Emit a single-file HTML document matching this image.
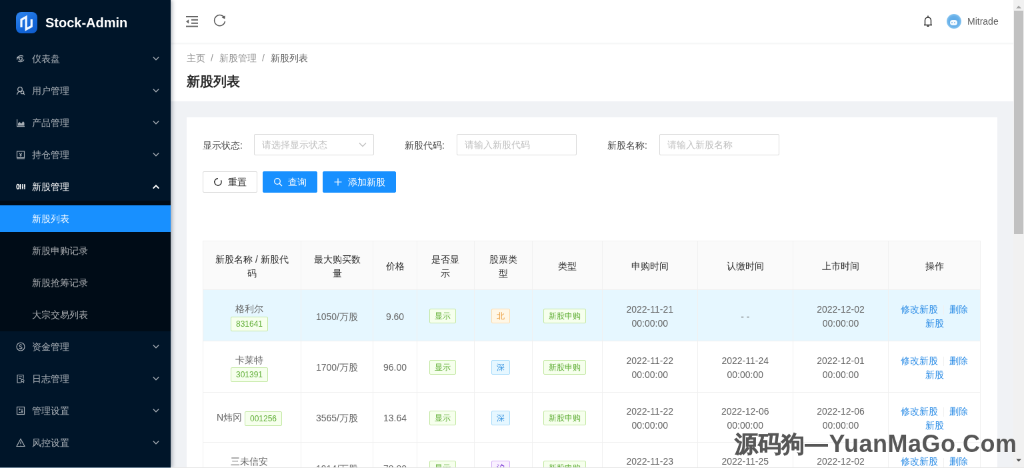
<!DOCTYPE html>
<html><head><meta charset="utf-8"><style>
html,body{margin:0;padding:0;width:1024px;height:468px;overflow:hidden;background:#f0f2f5;}
#root{position:absolute;left:0;top:0;width:1536px;height:702px;transform:scale(0.6666667);will-change:transform;transform-origin:0 0;font-family:"Liberation Sans",sans-serif;font-size:14px;color:rgba(0,0,0,.65);background:#f0f2f5;overflow:hidden}
.abs{position:absolute}
#sider{position:absolute;left:0;top:0;width:256px;height:702px;background:#001529;box-shadow:2px 0 6px rgba(0,21,41,.35);z-index:5}
#logo{position:absolute;left:24px;top:18px;width:32px;height:32px;border-radius:8px;background:linear-gradient(150deg,#2f86ee,#1366d8 60%,#0f5ccc)}
#title{position:absolute;left:68px;top:19px;line-height:30px;font-size:20px;font-weight:bold;color:#fff}
#sub{position:absolute;left:0;top:301px;width:256px;height:196px;background:#000c17}
.mi{position:absolute;left:0;width:256px;height:40px;line-height:40px;color:rgba(255,255,255,.65);white-space:nowrap}
.mi .ic{position:absolute;left:24px;top:13px;width:14px;height:14px;line-height:0}
.mi .lb{position:absolute;left:48px;top:0}
.mi .ar{position:absolute;left:228.5px;top:14.5px;line-height:0}
.mi.sel{background:#1890ff;color:#fff}
.mi.open{color:#fff}
#header{position:absolute;left:256px;top:0;width:1280px;height:64px;background:#fff;box-shadow:0 1px 4px rgba(0,21,41,.08);z-index:3}
#ph{position:absolute;left:256px;top:64px;width:1280px;height:88px;background:#fff}
.crumb{position:absolute;top:76px;line-height:22px;color:rgba(0,0,0,.45)}
#ptitle{position:absolute;left:280px;top:106px;font-size:20px;font-weight:bold;line-height:32px;color:rgba(0,0,0,.85)}
#card{position:absolute;left:280px;top:176px;width:1216px;height:600px;background:#fff}
.lbl{position:absolute;top:206.5px;line-height:22px;color:rgba(0,0,0,.75)}
.inp{position:absolute;top:201px;height:30px;width:178px;border:1px solid #d9d9d9;border-radius:2px;background:#fff;line-height:30px;color:#bfbfbf;box-sizing:content-box}
.inp span{position:absolute;left:11px;top:0}
.btn{position:absolute;top:257px;height:30px;line-height:30px;border:1px solid #d9d9d9;border-radius:2px;background:#fff;color:rgba(0,0,0,.85);white-space:nowrap}
.btn.pri{background:#1890ff;border-color:#1890ff;color:#fff}
.btn .bi{position:absolute;left:15px;top:8px;line-height:0}
.btn .bt{position:absolute;left:37px;top:0}
.th,.td{position:absolute;box-sizing:border-box;border-right:1.5px solid #f0f0f0;border-bottom:1.5px solid #f0f0f0;display:flex;align-items:center;justify-content:center;text-align:center}
.th{background:#fafafa;color:rgba(0,0,0,.85);border-top:1.5px solid #f0f0f0}
.td{color:#646464}
.td.hl{background:#e6f7ff}
.fl{border-left:1.5px solid #f0f0f0}
.ct{line-height:21px;padding:0 16px;position:relative;top:2px}
.tag{display:inline-block;box-sizing:border-box;height:22px;line-height:20px;padding:0 7px;font-size:12px;border:1px solid;border-radius:2px;vertical-align:middle}
.tag.green{background:#f6ffed;border-color:#c3e8a3;color:#5fae35}
.tag.orange{background:#fff7e6;border-color:#fddcae;color:#e99a3a}
.tag.blue{background:#e6f7ff;border-color:#a9dcfb;color:#3a95e0}
.tag.purple{background:#f9f0ff;border-color:#d3adf7;color:#722ed1}
.tag.mr{margin-right:8px;position:relative;top:-1px}
.ct.nm{padding:0 20px 0 12px}
a{color:#2b8ce6}
.dv{display:inline-block;width:1px;height:14px;background:#f0f0f0;margin:0 8px;vertical-align:middle}
#scroll{position:absolute;left:1520px;top:0;width:16px;height:702px;background:#f1f1f1;z-index:10}
#thumb{position:absolute;left:1px;top:16px;width:14px;height:335px;background:#c1c1c1}
#wm{position:absolute;left:1103px;top:646px;height:40px;width:420px;font-weight:bold;color:#575757;white-space:nowrap;z-index:20;text-shadow:0 0 1.5px #fff,0 0 1.5px #fff,0 0 1.5px #fff}
.wc{position:absolute;left:-1px;top:0;font-size:34.5px;line-height:40px;-webkit-text-stroke:0.7px #575757}
.wd{position:absolute;left:104.2px;top:20.2px;width:35.2px;height:3.6px;background:#575757;box-shadow:0 0 1.5px #fff}
.wl{position:absolute;left:140.5px;top:0;font-size:36px;line-height:40px;letter-spacing:0.5px}
#bottomline{position:absolute;left:256px;top:700.5px;width:1280px;height:1.5px;background:#e6e6e6;z-index:30}
#bottomline2{position:absolute;left:0;top:700.5px;width:256px;height:1.5px;background:#8096a9;z-index:30}
</style></head><body><div id="root">
<div id="sider">
 <div id="logo"><svg width="32" height="32" viewBox="0 0 32 32" fill="none" stroke="#f2f8ff" stroke-width="3.2" stroke-linejoin="miter" stroke-linecap="butt"><path d="M8 23V11.5L15.2 7.5V26L23.3 21.5V11"/></svg></div>
 <div id="title">Stock-Admin</div>
 <div id="sub"></div>
<div class="mi" style="top:68px"><span class="ic"><svg width="14" height="14" viewBox="0 0 14 14" fill="none" stroke="currentColor" stroke-width="1.3"><path d="M2 5.5C3.5 2.5 8 1.5 11 3.5M12 8.5C10.5 11.5 6 12.5 3 10.5"/><circle cx="7" cy="7" r="2.3"/><path d="M1.5 8.5 2 5.3 4.8 6"/></svg></span><span class="lb">仪表盘</span><span class="ar"><svg width="10" height="10" viewBox="0 0 10 10" fill="none" stroke="currentColor" stroke-width="1.35" stroke-linecap="round"><path d="M1.2 3 5 6.8 8.8 3"/></svg></span></div>
<div class="mi" style="top:116px"><span class="ic"><svg width="14" height="14" viewBox="0 0 14 14" fill="none" stroke="currentColor" stroke-width="1.3"><circle cx="6" cy="5" r="3.3"/><path d="M1.5 13C2 10 3.5 8.5 6 8.3"/><circle cx="9.5" cy="9.5" r="2.2"/><path d="M11 11l2 2"/></svg></span><span class="lb">用户管理</span><span class="ar"><svg width="10" height="10" viewBox="0 0 10 10" fill="none" stroke="currentColor" stroke-width="1.35" stroke-linecap="round"><path d="M1.2 3 5 6.8 8.8 3"/></svg></span></div>
<div class="mi" style="top:164px"><span class="ic"><svg width="14" height="14" viewBox="0 0 14 14" fill="currentColor"><path d="M1 2h1.2v10H13v1.2H1z"/><path d="M3 11.5V8l2.5-2 2.5 2.5L10.5 5 12.5 7v4.5z"/></svg></span><span class="lb">产品管理</span><span class="ar"><svg width="10" height="10" viewBox="0 0 10 10" fill="none" stroke="currentColor" stroke-width="1.35" stroke-linecap="round"><path d="M1.2 3 5 6.8 8.8 3"/></svg></span></div>
<div class="mi" style="top:212px"><span class="ic"><svg width="14" height="14" viewBox="0 0 14 14" fill="none" stroke="currentColor" stroke-width="1.2"><rect x="1.5" y="2" width="11" height="9.5"/><path d="M1 13h12"/><path d="M5 4.5l2 2.5 2-2.5M7 7v3M5.3 7.8h3.4"/></svg></span><span class="lb">持仓管理</span><span class="ar"><svg width="10" height="10" viewBox="0 0 10 10" fill="none" stroke="currentColor" stroke-width="1.35" stroke-linecap="round"><path d="M1.2 3 5 6.8 8.8 3"/></svg></span></div>
<div class="mi open" style="top:260px"><span class="ic"><svg width="14" height="14" viewBox="0 0 14 14" fill="none" stroke="currentColor" stroke-width="1.5"><ellipse cx="2.8" cy="7" rx="1.6" ry="3.5"/><path d="M6.5 3v8M10 3v8M13 3v8"/><path d="M5.5 6h2M9 8h2M12 6h2"/></svg></span><span class="lb">新股管理</span><span class="ar"><svg width="10" height="10" viewBox="0 0 10 10" fill="none" stroke="currentColor" stroke-width="1.9" stroke-linecap="round"><path d="M1.3 7 5 3.3 8.7 7"/></svg></span></div>
<div class="mi sel" style="top:308px"><span class="lb">新股列表</span></div>
<div class="mi" style="top:356px"><span class="lb">新股申购记录</span></div>
<div class="mi" style="top:404px"><span class="lb">新股抢筹记录</span></div>
<div class="mi" style="top:452px"><span class="lb">大宗交易列表</span></div>
<div class="mi" style="top:500px"><span class="ic"><svg width="14" height="14" viewBox="0 0 14 14" fill="none" stroke="currentColor" stroke-width="1.2"><circle cx="7" cy="7" r="6"/><path d="M9 5C8.5 4 5 3.8 5 5.5S9 7 9 8.8 5.5 10 5 9M7 3v1M7 10v1"/></svg></span><span class="lb">资金管理</span><span class="ar"><svg width="10" height="10" viewBox="0 0 10 10" fill="none" stroke="currentColor" stroke-width="1.35" stroke-linecap="round"><path d="M1.2 3 5 6.8 8.8 3"/></svg></span></div>
<div class="mi" style="top:548px"><span class="ic"><svg width="14" height="14" viewBox="0 0 14 14" fill="none" stroke="currentColor" stroke-width="1.2"><path d="M7 13H2V1.5h9V7"/><path d="M4 4h5M4 6.5h4"/><path d="M8 13V8.5h2.5a1.5 1.5 0 0 1 0 3H8M10 11.5l2 1.5"/></svg></span><span class="lb">日志管理</span><span class="ar"><svg width="10" height="10" viewBox="0 0 10 10" fill="none" stroke="currentColor" stroke-width="1.35" stroke-linecap="round"><path d="M1.2 3 5 6.8 8.8 3"/></svg></span></div>
<div class="mi" style="top:596px"><span class="ic"><svg width="14" height="14" viewBox="0 0 14 14" fill="none" stroke="currentColor" stroke-width="1.2"><rect x="1.5" y="1.5" width="11" height="11"/><path d="M4 5h3M5.5 3.5v3M4 9.5h3M9 4v6M8 8l1 2 1-2"/></svg></span><span class="lb">管理设置</span><span class="ar"><svg width="10" height="10" viewBox="0 0 10 10" fill="none" stroke="currentColor" stroke-width="1.35" stroke-linecap="round"><path d="M1.2 3 5 6.8 8.8 3"/></svg></span></div>
<div class="mi" style="top:644px"><span class="ic"><svg width="14" height="14" viewBox="0 0 14 14" fill="none" stroke="currentColor" stroke-width="1.2"><path d="M7 1.5 13 12.5H1z"/><path d="M7 5.5v3.5M7 10.3v1"/></svg></span><span class="lb">风控设置</span><span class="ar"><svg width="10" height="10" viewBox="0 0 10 10" fill="none" stroke="currentColor" stroke-width="1.35" stroke-linecap="round"><path d="M1.2 3 5 6.8 8.8 3"/></svg></span></div>
</div>
<div id="header">
 <svg class="abs" style="left:23px;top:24px" width="18" height="18" viewBox="0 0 18 18" fill="#666"><rect x="0" y="0" width="18" height="2"/><rect x="8" y="4.8" width="10" height="2"/><rect x="8" y="9.8" width="10" height="2"/><rect x="0" y="14.6" width="18" height="2"/><path d="M0 8.3 4.2 5.2v6.2z"/></svg>
 <svg class="abs" style="left:64px;top:19.5px" width="20" height="20" viewBox="0 0 20 20" fill="none" stroke="#595959" stroke-width="1.5"><path d="M17 7.5A8 8 0 1 0 17.5 12"/><path d="M17.8 3.2 17.2 8.2 12.6 6.6z" fill="#595959" stroke="none"/></svg>
 <svg class="abs" style="left:1129px;top:22px" width="14" height="19" viewBox="0 0 14 19" fill="none" stroke="#262626" stroke-width="1.4"><path d="M1 15.5h12M2.5 15V8.5a4.5 4.5 0 0 1 9 0V15M7 1.5V3.5M5.5 17.2h3"/></svg>
 <div class="abs" style="left:1163.5px;top:21px;width:22px;height:22px;border-radius:50%;background:radial-gradient(circle,#5aa6e4 0,#67b0e9 50%,#9ad0f4 82%,#c2e2f8 100%)"><div class="abs" style="left:5px;top:9px;width:11px;height:8px;border-radius:4px;background:#f4faff"></div><div class="abs" style="left:7.5px;top:12px;width:2px;height:2px;border-radius:1px;background:#7fb7e6"></div><div class="abs" style="left:11.5px;top:12px;width:2px;height:2px;border-radius:1px;background:#7fb7e6"></div></div>
 <div class="abs" style="left:1195px;top:21px;line-height:22px;color:rgba(0,0,0,.65)">Mitrade</div>
</div>
<div id="ph"></div>
<div class="crumb" style="left:280px">主页</div>
<div class="crumb" style="left:316px">/</div>
<div class="crumb" style="left:329px">新股管理</div>
<div class="crumb" style="left:393px">/</div>
<div class="crumb" style="left:406px;color:rgba(0,0,0,.65)">新股列表</div>
<div id="ptitle">新股列表</div>
<div id="card"></div>
<div class="lbl" style="left:304px">显示状态:</div>
<div class="inp" style="left:381px"><span>请选择显示状态</span><svg class="abs" style="left:156px;top:11px" width="12" height="8" viewBox="0 0 12 8" fill="none" stroke="#bfbfbf" stroke-width="1.3"><path d="M1 1.5 6 6.5 11 1.5"/></svg></div>
<div class="lbl" style="left:607px">新股代码:</div>
<div class="inp" style="left:685px"><span>请输入新股代码</span></div>
<div class="lbl" style="left:911px">新股名称:</div>
<div class="inp" style="left:989px"><span>请输入新股名称</span></div>
<div class="btn" style="left:304px;width:80px"><span class="bi"><svg width="14" height="14" viewBox="0 0 14 14" fill="none" stroke="currentColor" stroke-width="1.4"><path d="M7 1.8A5.2 5.2 0 1 0 11.5 4.4"/></svg></span><span class="bt">重置</span></div>
<div class="btn pri" style="left:394px;width:80px"><span class="bi"><svg width="14" height="14" viewBox="0 0 14 14" fill="none" stroke="currentColor" stroke-width="1.3"><circle cx="6" cy="6" r="4.3"/><path d="M9.2 9.2 13 13"/></svg></span><span class="bt">查询</span></div>
<div class="btn pri" style="left:484px;width:108px"><span class="bi"><svg width="14" height="14" viewBox="0 0 14 14" fill="none" stroke="currentColor" stroke-width="1.2"><path d="M7 1.5v11M1.5 7h11"/></svg></span><span class="bt">添加新股</span></div>
<div class="th fl" style="left:304px;top:360.5px;width:148px;height:74.5px"><div class="ct">新股名称 / 新股代<br>码</div></div>
<div class="th" style="left:452px;top:360.5px;width:108px;height:74.5px"><div class="ct">最大购买数<br>量</div></div>
<div class="th" style="left:560px;top:360.5px;width:66px;height:74.5px"><div class="ct">价格</div></div>
<div class="th" style="left:626px;top:360.5px;width:85.5px;height:74.5px"><div class="ct">是否显<br>示</div></div>
<div class="th" style="left:711.5px;top:360.5px;width:87.5px;height:74.5px"><div class="ct">股票类<br>型</div></div>
<div class="th" style="left:799px;top:360.5px;width:105px;height:74.5px"><div class="ct">类型</div></div>
<div class="th" style="left:904px;top:360.5px;width:142.5px;height:74.5px"><div class="ct">申购时间</div></div>
<div class="th" style="left:1046.5px;top:360.5px;width:143.5px;height:74.5px"><div class="ct">认缴时间</div></div>
<div class="th" style="left:1190px;top:360.5px;width:143px;height:74.5px"><div class="ct">上市时间</div></div>
<div class="th" style="left:1333px;top:360.5px;width:138px;height:74.5px"><div class="ct">操作</div></div>
<div class="td hl fl" style="left:304px;top:435px;width:148px;height:77px"><div class="ct nm">格利尔<br><span class="tag green">831641</span></div></div>
<div class="td hl" style="left:452px;top:435px;width:108px;height:77px"><div class="ct">1050/万股</div></div>
<div class="td hl" style="left:560px;top:435px;width:66px;height:77px"><div class="ct">9.60</div></div>
<div class="td hl" style="left:626px;top:435px;width:85.5px;height:77px"><div class="ct"><span class="tag green mr">显示</span></div></div>
<div class="td hl" style="left:711.5px;top:435px;width:87.5px;height:77px"><div class="ct"><span class="tag orange mr">北</span></div></div>
<div class="td hl" style="left:799px;top:435px;width:105px;height:77px"><div class="ct"><span class="tag green mr">新股申购</span></div></div>
<div class="td hl" style="left:904px;top:435px;width:142.5px;height:77px"><div class="ct">2022-11-21<br>00:00:00</div></div>
<div class="td hl" style="left:1046.5px;top:435px;width:143.5px;height:77px"><div class="ct"><span class="dash">- -</span></div></div>
<div class="td hl" style="left:1190px;top:435px;width:143px;height:77px"><div class="ct">2022-12-02<br>00:00:00</div></div>
<div class="td hl" style="left:1333px;top:435px;width:138px;height:77px"><div class="ct"><a>修改新股</a><span class="dv"></span><a>删除</a><br><a>新股</a></div></div>
<div class="td fl" style="left:304px;top:512px;width:148px;height:76.5px"><div class="ct nm">卡莱特<br><span class="tag green">301391</span></div></div>
<div class="td" style="left:452px;top:512px;width:108px;height:76.5px"><div class="ct">1700/万股</div></div>
<div class="td" style="left:560px;top:512px;width:66px;height:76.5px"><div class="ct">96.00</div></div>
<div class="td" style="left:626px;top:512px;width:85.5px;height:76.5px"><div class="ct"><span class="tag green mr">显示</span></div></div>
<div class="td" style="left:711.5px;top:512px;width:87.5px;height:76.5px"><div class="ct"><span class="tag blue mr">深</span></div></div>
<div class="td" style="left:799px;top:512px;width:105px;height:76.5px"><div class="ct"><span class="tag green mr">新股申购</span></div></div>
<div class="td" style="left:904px;top:512px;width:142.5px;height:76.5px"><div class="ct">2022-11-22<br>00:00:00</div></div>
<div class="td" style="left:1046.5px;top:512px;width:143.5px;height:76.5px"><div class="ct">2022-11-24<br>00:00:00</div></div>
<div class="td" style="left:1190px;top:512px;width:143px;height:76.5px"><div class="ct">2022-12-01<br>00:00:00</div></div>
<div class="td" style="left:1333px;top:512px;width:138px;height:76.5px"><div class="ct"><a>修改新股</a><span class="dv"></span><a>删除</a><br><a>新股</a></div></div>
<div class="td fl" style="left:304px;top:588.5px;width:148px;height:75.0px"><div class="ct nm">N炜冈 <span class="tag green">001256</span></div></div>
<div class="td" style="left:452px;top:588.5px;width:108px;height:75.0px"><div class="ct">3565/万股</div></div>
<div class="td" style="left:560px;top:588.5px;width:66px;height:75.0px"><div class="ct">13.64</div></div>
<div class="td" style="left:626px;top:588.5px;width:85.5px;height:75.0px"><div class="ct"><span class="tag green mr">显示</span></div></div>
<div class="td" style="left:711.5px;top:588.5px;width:87.5px;height:75.0px"><div class="ct"><span class="tag blue mr">深</span></div></div>
<div class="td" style="left:799px;top:588.5px;width:105px;height:75.0px"><div class="ct"><span class="tag green mr">新股申购</span></div></div>
<div class="td" style="left:904px;top:588.5px;width:142.5px;height:75.0px"><div class="ct">2022-11-22<br>00:00:00</div></div>
<div class="td" style="left:1046.5px;top:588.5px;width:143.5px;height:75.0px"><div class="ct">2022-12-06<br>00:00:00</div></div>
<div class="td" style="left:1190px;top:588.5px;width:143px;height:75.0px"><div class="ct">2022-12-06<br>00:00:00</div></div>
<div class="td" style="left:1333px;top:588.5px;width:138px;height:75.0px"><div class="ct"><a>修改新股</a><span class="dv"></span><a>删除</a><br><a>新股</a></div></div>
<div class="td fl" style="left:304px;top:663.5px;width:148px;height:76.5px"><div class="ct nm">三未信安<br><span class="tag green">688489</span></div></div>
<div class="td" style="left:452px;top:663.5px;width:108px;height:76.5px"><div class="ct">1914/万股</div></div>
<div class="td" style="left:560px;top:663.5px;width:66px;height:76.5px"><div class="ct">78.80</div></div>
<div class="td" style="left:626px;top:663.5px;width:85.5px;height:76.5px"><div class="ct"><span class="tag green mr">显示</span></div></div>
<div class="td" style="left:711.5px;top:663.5px;width:87.5px;height:76.5px"><div class="ct"><span class="tag purple mr">沪</span></div></div>
<div class="td" style="left:799px;top:663.5px;width:105px;height:76.5px"><div class="ct"><span class="tag green mr">新股申购</span></div></div>
<div class="td" style="left:904px;top:663.5px;width:142.5px;height:76.5px"><div class="ct">2022-11-23<br>00:00:00</div></div>
<div class="td" style="left:1046.5px;top:663.5px;width:143.5px;height:76.5px"><div class="ct">2022-11-25<br>00:00:00</div></div>
<div class="td" style="left:1190px;top:663.5px;width:143px;height:76.5px"><div class="ct">2022-12-02<br>00:00:00</div></div>
<div class="td" style="left:1333px;top:663.5px;width:138px;height:76.5px"><div class="ct"><a>修改新股</a><span class="dv"></span><a>删除</a><br><a>新股</a></div></div>
<div id="scroll"><svg class="abs" style="left:3px;top:6.5px" width="10" height="6" viewBox="0 0 10 6"><path d="M1 5.5 5 1.5 9 5.5z" fill="#a3a3a3"/></svg><div id="thumb"></div><svg class="abs" style="left:3px;top:688px" width="10" height="6" viewBox="0 0 10 6"><path d="M1 0.5 5 4.5 9 0.5z" fill="#505050"/></svg></div>
<div id="wm"><span class="wc">源码狗</span><span class="wd"></span><span class="wl">YuanMaGo.Com</span></div>
<div id="bottomline"></div><div id="bottomline2"></div>
</div></body></html>
